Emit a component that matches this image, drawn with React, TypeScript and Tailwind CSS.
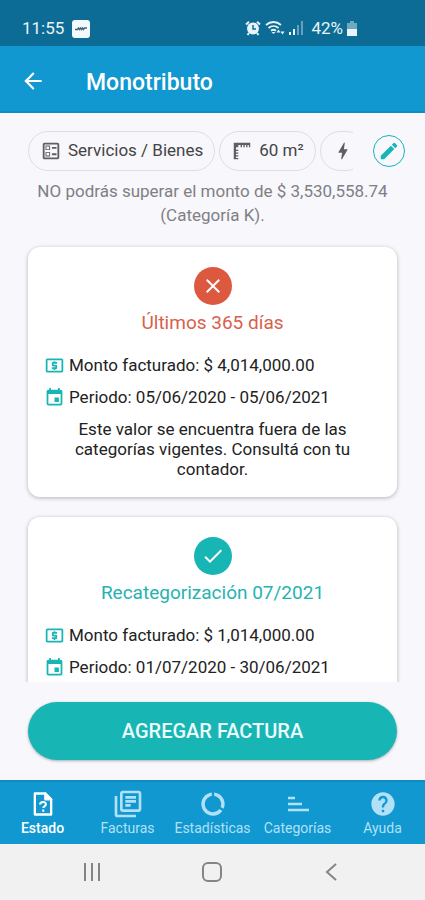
import type { ReactNode } from 'react'
import {
  MdArrowBack,
  MdBolt,
  MdCheck,
  MdClose,
  MdDataUsage,
  MdEdit,
  MdEvent,
  MdHelp,
  MdLocalAtm,
  MdOutlineBallot,
  MdOutlineLibraryBooks,
} from 'react-icons/md'

type Status = 'error' | 'ok'

const summaries: { status: Status; title: string; amount: string; period: string; note?: string }[] = [
  {
    status: 'error',
    title: 'Últimos 365 días',
    amount: '$ 4,014,000.00',
    period: '05/06/2020 - 05/06/2021',
    note: 'Este valor se encuentra fuera de las categorías vigentes. Consultá con tu contador.',
  },
  {
    status: 'ok',
    title: 'Recategorización 07/2021',
    amount: '$ 1,014,000.00',
    period: '01/07/2020 - 30/06/2021',
  },
]

export default function App() {
  return (
    <div className="flex h-screen flex-col bg-[#f7f7fc] font-['Roboto',sans-serif] text-[#222]">
      <StatusBar />
      <header className="flex h-[67px] shrink-0 items-center gap-10 border-b-2 border-[#0e8cc2] bg-[#1198d0] px-5 pt-1 text-white">
        <button aria-label="Volver">
          <MdArrowBack className="size-[26px]" />
        </button>
        <h1 className="pt-1 text-[23px] leading-6 font-medium">Monotributo</h1>
      </header>

      <main className="flex min-h-0 flex-1 flex-col px-7 pt-[18px]">
        <div className="flex shrink-0 items-center justify-between">
          <div className="mr-5 flex min-w-0 flex-1 gap-1 overflow-hidden">
            <Chip icon={<MdOutlineBallot className="size-[22px]" />}>Servicios / Bienes</Chip>
            <Chip icon={<RulerIcon />}>60 m²</Chip>
            <Chip icon={<MdBolt className="size-[22px]" />} />
          </div>
          <button
            aria-label="Editar"
            className="-mr-2 flex size-8 shrink-0 items-center justify-center rounded-full border border-[#18b5b5] text-[#18b5b5]"
          >
            <MdEdit className="size-[22px]" />
          </button>
        </div>

        <div className="-mx-2 min-h-0 flex-1 overflow-hidden px-2">
          <p className="pt-2 pb-5 text-center text-[17px] leading-6 text-[#7f7f84]">
            NO podrás superar el monto de $ 3,530,558.74 (Categoría K).
          </p>
          <div className="flex flex-col gap-5">
            {summaries.map((s) => (
              <SummaryCard key={s.title} {...s} />
            ))}
          </div>
        </div>
      </main>

      <div className="shrink-0 px-7 py-5">
        <button className="h-[58px] w-full rounded-full bg-[#18b5b5] text-[20px] font-medium text-[#ecfbfb] shadow-[0_1px_3px_rgba(0,0,0,0.3)]">
          AGREGAR FACTURA
        </button>
      </div>

      <nav className="grid h-16 shrink-0 grid-cols-5 border-t-2 border-[#0e8cc2] bg-[#1198d0]">
        <NavItem label="Estado" icon={<FileQuestionIcon />} active />
        <NavItem label="Facturas" icon={<MdOutlineLibraryBooks className="size-8" />} />
        <NavItem label="Estadísticas" icon={<MdDataUsage className="size-7" />} />
        <NavItem label="Categorías" icon={<BarsIcon />} />
        <NavItem label="Ayuda" icon={<MdHelp className="size-7" />} />
      </nav>
      <SystemBar />
    </div>
  )
}

function StatusBar() {
  return (
    <div className="flex h-[46px] shrink-0 items-end gap-1 bg-[#0c6c96] px-5 pb-2 text-[17px] leading-5 text-[#e8f4f9]">
      <span className="pl-0.5">11:55</span>
      <svg viewBox="0 0 18 18" className="ml-1 size-[18px]">
        <rect width="18" height="18" rx="3" fill="#f2fafd" />
        <path d="M3 9.5h2.5l1-1.5 1 1.5 1-1.5 1 1.5 1-1.5 1 1.5 1-1.5H15" fill="none" stroke="#4c6572" strokeWidth="1.4" />
      </svg>
      <div className="mr-12 ml-auto flex items-center gap-1">
        <AlarmIcon />
        <WifiIcon />
        <SignalIcon />
        <span className="ml-1">42%</span>
        <BatteryIcon />
      </div>
    </div>
  )
}

function Chip({ icon, children }: { icon: ReactNode; children?: ReactNode }) {
  return (
    <span className="flex h-10 shrink-0 items-center gap-1.5 rounded-full border border-[#dedee2] px-[11px] text-[17px] whitespace-nowrap text-[#444]">
      <span className="text-[#5f5f63]">{icon}</span>
      {children}
    </span>
  )
}

function SummaryCard({ status, title, amount, period, note }: (typeof summaries)[number]) {
  const ok = status === 'ok'
  return (
    <section className="rounded-xl bg-white px-4 pt-5 pb-[18px] shadow-[0_1px_4px_rgba(0,0,0,0.28)]">
      <div
        className={`mx-auto flex size-[38px] items-center justify-center rounded-full text-white ${
          ok ? 'bg-[#18b5b5]' : 'bg-[#dc5940]'
        }`}
      >
        {ok ? <MdCheck className="size-6" /> : <MdClose className="size-6" />}
      </div>
      <h2 className={`mt-0.5 mb-3.5 text-center text-[19px] leading-8 ${ok ? 'text-[#25b3b0]' : 'text-[#d9604c]'}`}>
        {title}
      </h2>
      <div className="flex flex-col gap-2">
        <Row icon={<MdLocalAtm className="size-[21px]" />}>Monto facturado: {amount}</Row>
        <Row icon={<MdEvent className="size-[21px]" />}>Periodo: {period}</Row>
      </div>
      {note && <p className="mx-7 mt-2.5 text-center text-[17px] leading-5">{note}</p>}
    </section>
  )
}

function Row({ icon, children }: { icon: ReactNode; children: ReactNode }) {
  return (
    <div className="flex items-center gap-1 text-[17px] leading-6">
      <span className="text-[#18b5b5]">{icon}</span>
      {children}
    </div>
  )
}

function NavItem({ label, icon, active }: { label: string; icon: ReactNode; active?: boolean }) {
  return (
    <a
      href="#"
      className={`flex flex-col items-center pt-2 text-[14px] leading-5 ${
        active ? 'font-medium text-white' : 'text-[#b0e1f6]'
      }`}
    >
      <span className="flex h-7 items-center">{icon}</span>
      {label}
    </a>
  )
}

function SystemBar() {
  return (
    <div className="flex h-14 shrink-0 items-center justify-around bg-[#f1f1f1] px-8 text-[#858585]">
      <button aria-label="Recientes">
        <svg viewBox="0 0 20 20" className="size-5" fill="none" stroke="currentColor" strokeWidth="2">
          <path d="M3 1v18M10 1v18M17 1v18" />
        </svg>
      </button>
      <button aria-label="Inicio">
        <svg viewBox="0 0 20 20" className="size-5" fill="none" stroke="currentColor" strokeWidth="2">
          <rect x="1" y="1" width="18" height="18" rx="5" />
        </svg>
      </button>
      <button aria-label="Atrás">
        <svg viewBox="0 0 20 20" className="size-5" fill="none" stroke="currentColor" strokeWidth="2">
          <path d="M13 2 4 10l9 8" />
        </svg>
      </button>
    </div>
  )
}

function RulerIcon() {
  return (
    <svg viewBox="0 0 24 24" className="size-[22px]" fill="currentColor">
      <path d="M3 3h18v5h-1.500V5.500H18V8h-1.500V5.500H15V8h-1.500V5.500H12V8h-1.500V5.500H8V8H5.500v2.500H8V12H5.500v1.500H8V15H5.500v1.500H8V18H5.500v1.500H8V21H3z" />
    </svg>
  )
}

function FileQuestionIcon() {
  return (
    <svg viewBox="0 0 24 24" className="size-7" fill="none" stroke="currentColor" strokeWidth="2">
      <path d="M5 3h9l5 5v13H5z" strokeLinejoin="round" />
      <path d="M14 3v5h5z" fill="currentColor" strokeLinejoin="round" />
      <path d="M9.5 12.500c0-3 5-3 5-.3 0 1.800-2.300 1.800-2.300 3.300M12.200 16.800v1.800" strokeWidth="1.700" />
    </svg>
  )
}

function BarsIcon() {
  return (
    <svg viewBox="0 0 24 24" className="size-6" fill="none" stroke="currentColor" strokeWidth="2.500">
      <path d="M2 6h7M2 12h14M2 18h21" />
    </svg>
  )
}

function AlarmIcon() {
  return (
    <svg viewBox="0 0 16 16" className="size-4" fill="none" stroke="currentColor" strokeWidth="2">
      <circle cx="8" cy="8.500" r="6" fill="currentColor" stroke="none" />
      <path d="M1 4.500 4 1.800M15 4.500l-3-2.700M4 13l-1.500 2M12 13l1.500 2" />
      <path d="M8 5v4h3" stroke="#0c6c96" strokeWidth="1.500" />
    </svg>
  )
}

function WifiIcon() {
  return (
    <svg viewBox="0 0 20 18" className="h-[18px] w-5" fill="none" stroke="currentColor" strokeWidth="1.800">
      <path d="M1 6c4.500-4 10.500-4 15 0M3.500 9c3-2.600 7-2.600 10 0M6 11.800c1.500-1.200 3.500-1.200 5 0" />
      <path d="m8.500 15-2-2h4z" fill="currentColor" stroke="none" />
      <path d="m13.500 10.500-2 3h4zM17.500 15.500l-2-3h4z" fill="currentColor" stroke="none" />
    </svg>
  )
}

function SignalIcon() {
  return (
    <svg viewBox="0 0 14 14" className="size-3.5" fill="currentColor">
      <path d="M0 11h2v3H0zM4 8h2v6H4z" />
      <path d="M8 4h2v10H8zM12 0h2v14h-2z" opacity=".4" />
    </svg>
  )
}

function BatteryIcon() {
  return (
    <svg viewBox="0 0 10 15" className="h-[15px] w-2.5" fill="currentColor">
      <path d="M3 0h4v2h3v6H0V2h3z" opacity=".45" />
      <path d="M0 8h10v7H0z" />
    </svg>
  )
}
